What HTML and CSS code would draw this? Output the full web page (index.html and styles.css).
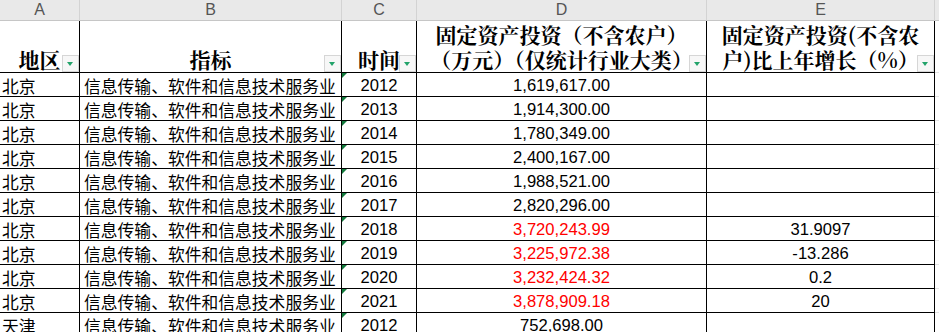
FILE: index.html
```html
<!DOCTYPE html>
<html lang="zh-CN">
<head>
<meta charset="utf-8">
<title>Sheet</title>
<link rel="stylesheet" href="styles.css">
</head>
<body>
<div class="sheet">
  <div class="row letters">
    <div class="lt">A</div><div class="lt">B</div><div class="lt">C</div><div class="lt">D</div><div class="lt">E</div><div class="lt last"></div>
  </div>
  <div class="row head">
    <div class="hc"><span class="ht">地区</span><span class="filter"></span></div>
    <div class="hc"><span class="ht">指标</span><span class="filter"></span></div>
    <div class="hc"><span class="ht">时间</span><span class="filter"></span></div>
    <div class="hc"><span class="ht">固定资产投资（不含农户）<br>（万元）（仅统计行业大类）</span><span class="filter"></span></div>
    <div class="hc"><span class="ht">固定资产投资(不含农<br>户)比上年增长（%）</span><span class="filter"></span></div>
    <div class="fc"></div>
  </div>
  <div class="row"><div class="c a">北京</div><div class="c b">信息传输、软件和信息技术服务业</div><div class="c y">2012</div><div class="c n">1,619,617.00</div><div class="c n"></div><div class="fc"></div></div>
  <div class="row"><div class="c a">北京</div><div class="c b">信息传输、软件和信息技术服务业</div><div class="c y">2013</div><div class="c n">1,914,300.00</div><div class="c n"></div><div class="fc"></div></div>
  <div class="row"><div class="c a">北京</div><div class="c b">信息传输、软件和信息技术服务业</div><div class="c y">2014</div><div class="c n">1,780,349.00</div><div class="c n"></div><div class="fc"></div></div>
  <div class="row"><div class="c a">北京</div><div class="c b">信息传输、软件和信息技术服务业</div><div class="c y">2015</div><div class="c n">2,400,167.00</div><div class="c n"></div><div class="fc"></div></div>
  <div class="row"><div class="c a">北京</div><div class="c b">信息传输、软件和信息技术服务业</div><div class="c y">2016</div><div class="c n">1,988,521.00</div><div class="c n"></div><div class="fc"></div></div>
  <div class="row"><div class="c a">北京</div><div class="c b">信息传输、软件和信息技术服务业</div><div class="c y">2017</div><div class="c n">2,820,296.00</div><div class="c n"></div><div class="fc"></div></div>
  <div class="row"><div class="c a">北京</div><div class="c b">信息传输、软件和信息技术服务业</div><div class="c y">2018</div><div class="c n red">3,720,243.99</div><div class="c n">31.9097</div><div class="fc"></div></div>
  <div class="row"><div class="c a">北京</div><div class="c b">信息传输、软件和信息技术服务业</div><div class="c y">2019</div><div class="c n red">3,225,972.38</div><div class="c n">-13.286</div><div class="fc"></div></div>
  <div class="row"><div class="c a">北京</div><div class="c b">信息传输、软件和信息技术服务业</div><div class="c y">2020</div><div class="c n red">3,232,424.32</div><div class="c n">0.2</div><div class="fc"></div></div>
  <div class="row"><div class="c a">北京</div><div class="c b">信息传输、软件和信息技术服务业</div><div class="c y">2021</div><div class="c n red">3,878,909.18</div><div class="c n">20</div><div class="fc"></div></div>
  <div class="row"><div class="c a">天津</div><div class="c b">信息传输、软件和信息技术服务业</div><div class="c y">2012</div><div class="c n">752,698.00</div><div class="c n"></div><div class="fc"></div></div>
</div>
</body>
</html>
```

FILE: styles.css
```css
html, body {
  margin: 0;
  padding: 0;
  background: #ffffff;
  overflow: hidden;
}

.sheet {
  width: 939px;
  display: flex;
  flex-direction: column;
}

.row {
  display: grid;
  grid-template-columns: 80px 262px 75px 290px 228px 1fr;
  height: 24px;
}

.letters {
  height: 21px;
}

.lt {
  box-sizing: border-box;
  background: #e9e9e9;
  border-right: 1px solid #d3d3d3;
  border-bottom: 1px solid #c6c6c6;
  font-family: "Liberation Sans", Arial, sans-serif;
  font-size: 16px;
  line-height: 20px;
  color: #555555;
  text-align: center;
}

.lt.last {
  border-right: none;
}

.head {
  height: 52px;
}

.hc {
  position: relative;
  box-sizing: border-box;
  border-right: 1px solid #000;
  border-bottom: 1px solid #000;
  display: flex;
  align-items: flex-end;
  justify-content: center;
  font-family: "Noto Serif CJK SC", "Noto Sans CJK SC", serif;
  font-weight: 700;
  font-size: 21px;
  line-height: 25px;
  color: #000;
}

.ht {
  display: block;
  text-align: center;
  white-space: nowrap;
}

.filter {
  position: absolute;
  right: 0;
  bottom: 0;
  width: 17px;
  height: 17px;
  box-sizing: border-box;
  background: #f7f7f7;
  border: 1px solid #d6d6d6;
}

.filter::after {
  content: "";
  position: absolute;
  left: 4px;
  top: 6px;
  border-left: 3.5px solid transparent;
  border-right: 3.5px solid transparent;
  border-top: 4px solid #22a36a;
}

.fc {
  box-sizing: border-box;
  border-bottom: 1px solid #e2e2e2;
}

.c {
  position: relative;
  box-sizing: border-box;
  border-right: 1px solid #000;
  border-bottom: 1px solid #000;
  display: flex;
  align-items: flex-end;
  white-space: nowrap;
  overflow: hidden;
  line-height: 20px;
  color: #000;
}

.a, .b {
  font-family: "Noto Sans CJK SC", sans-serif;
  font-size: 16.8px;
}

.a {
  padding-left: 2px;
}

.b {
  padding-left: 4px;
}

.y, .n {
  font-family: "Liberation Sans", Arial, sans-serif;
  font-size: 16.6px;
  justify-content: center;
}

.y::before {
  content: "";
  position: absolute;
  left: 0;
  top: 0;
  border-top: 5px solid #127a3c;
  border-right: 5px solid transparent;
}

.red {
  color: #ff0000;
}
```
